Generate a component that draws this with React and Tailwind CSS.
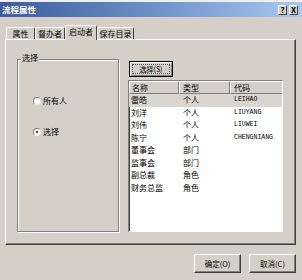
import React from 'react';

const rows = [
    { name: '雷皓', type: '个人', code: 'LEIHAO', selected: true },
    { name: '刘洋', type: '个人', code: 'LIUYANG' },
    { name: '刘伟', type: '个人', code: 'LIUWEI' },
    { name: '陈宁', type: '个人', code: 'CHENGNIANG' },
    { name: '董事会', type: '部门', code: '' },
    { name: '监事会', type: '部门', code: '' },
    { name: '副总裁', type: '角色', code: '' },
    { name: '财务总监', type: '角色', code: '' },
];

const tabs = [
    { label: '属性', w: 'w-[29px]' },
    { label: '督办者', w: 'w-[30px]' },
    { label: '启动者', w: 'w-[32px]', active: true },
    { label: '保存目录', w: 'w-[37px]' },
];

function Radio({ checked, label }) {
    return (
        <div className="flex items-center gap-[2px]">
            <span className="w-[8px] h-[8px] rounded-full bg-white border border-[#808080] border-r-[#e8e8e8] border-b-[#e8e8e8] flex items-center justify-center">
                {checked && <span className="w-[2px] h-[2px] rounded-full bg-black" />}
            </span>
            <span className="text-[8px] leading-none">{label}</span>
        </div>
    );
}

function ClassicButton({ children, className = '', def = false }) {
    return (
        <div className={`${className} ${def ? 'border border-black' : 'border border-white border-r-[#404040] border-b-[#404040]'} bg-[#d4d0c8]`}>
            <div className={`w-full h-full flex items-center justify-center ${def ? 'border border-white border-r-[#808080] border-b-[#808080] p-px' : 'shadow-[inset_-1px_-1px_0_#808080]'}`}>
                {def ? (
                    <span className="w-full h-full border border-dotted border-[#555] flex items-center justify-center text-[7px] leading-none whitespace-nowrap">
                        {children}
                    </span>
                ) : (
                    <span className="text-[7.5px] leading-none whitespace-nowrap">{children}</span>
                )}
            </div>
        </div>
    );
}

export default function App() {
    return (
        <div className="w-[302px] h-[280px] bg-[#d4d0c8] border-t-2 border-[#efefef] text-black font-['Noto_Sans_CJK_SC','Liberation_Sans',sans-serif] overflow-hidden">
            {/* Title bar */}
            <div className="h-[15px] bg-gradient-to-r from-[#3b5c9e] via-[#6e8fc6] to-[#a9caf0] flex items-center justify-between pl-[2px] pr-[4px]">
                <span className="text-white font-bold text-[8.5px] leading-none">流程属性</span>
                <div className="flex gap-[2px]">
                    <div className="w-[9px] h-[10px] bg-[#d4d0c8] border border-white border-r-[#404040] border-b-[#404040] flex items-center justify-center text-[8px] font-bold leading-none">?</div>
                    <div className="w-[9px] h-[10px] bg-[#d4d0c8] border border-white border-r-[#404040] border-b-[#404040] flex items-center justify-center text-[8px] font-bold leading-none">X</div>
                </div>
            </div>

            <div className="pl-[5px] pr-[6px]">
                {/* Tabs */}
                <div className="mt-[8px] h-[14px] flex items-end pl-[1px]">
                    {tabs.map((t) =>
                        t.active ? (
                            <div key={t.label} className={`${t.w} h-[15px] -mb-px relative z-10 bg-[#d4d0c8] border-t border-l border-white border-r border-r-[#404040] rounded-t-[2px] flex items-center justify-center text-[8px] leading-none pb-[2px]`}>
                                {t.label}
                            </div>
                        ) : (
                            <div key={t.label} className={`${t.w} h-[12px] bg-[#d4d0c8] border-t border-l border-white border-r border-r-[#404040] rounded-t-[2px] flex items-center justify-center text-[8px] leading-none`}>
                                {t.label}
                            </div>
                        )
                    )}
                </div>

                {/* Tab panel */}
                <div className="h-[206px] border border-white border-r-[#404040] border-b-[#404040] shadow-[inset_-1px_-1px_0_#808080] flex pl-[11px] pt-[19px]">
                    {/* Group box */}
                    <div className="relative w-[102px] h-[173px] border border-[#808080] shadow-[inset_1px_1px_0_#fff,1px_1px_0_#fff]">
                        <span className="absolute -top-[6px] left-[3px] bg-[#d4d0c8] px-[1px] text-[8px] leading-none">选择</span>
                        <div className="flex flex-col gap-[23px] pl-[15px] pt-[37px]">
                            <Radio label="所有人" />
                            <Radio label="选择" checked />
                        </div>
                    </div>

                    {/* Right column */}
                    <div className="ml-[9px] mt-[2px] flex flex-col">
                        <ClassicButton def className="w-[44px] h-[16px] ml-px">选择(S)</ClassicButton>
                        <div className="mt-[3px] w-[155px] h-[152px] border border-[#808080] border-r-white border-b-white bg-white">
                            <div className="h-full shadow-[inset_1px_1px_0_#404040]">
                                <div className="flex h-[13px] text-[8px] leading-none">
                                    <div className="w-[50px] bg-[#d4d0c8] border-t border-l border-white border-r border-b border-r-[#808080] border-b-[#808080] flex items-center pl-[2px]">名称</div>
                                    <div className="w-[51px] bg-[#d4d0c8] border-t border-l border-white border-r border-b border-r-[#808080] border-b-[#808080] flex items-center pl-[3px]">类型</div>
                                    <div className="flex-1 bg-[#d4d0c8] border-t border-l border-white border-b border-b-[#808080] flex items-center pl-[3px]">代码</div>
                                </div>
                                {rows.map((r) => (
                                    <div key={r.name} className={`flex h-[12.5px] items-center text-[8px] leading-none ${r.selected ? 'bg-[#d9d6d0]' : ''}`}>
                                        <span className="w-[50px] pl-[2px]">{r.name}</span>
                                        <span className="w-[51px] pl-[4px]">{r.type}</span>
                                        <span className="pl-[4px] font-['Liberation_Mono',monospace] text-[6.5px]">{r.code}</span>
                                    </div>
                                ))}
                            </div>
                        </div>
                    </div>
                </div>

                {/* Dialog buttons */}
                <div className="mt-[9px] flex justify-end gap-[8px]">
                    <ClassicButton className="w-[47px] h-[19px]">确定(O)</ClassicButton>
                    <ClassicButton className="w-[47px] h-[19px]">取消(C)</ClassicButton>
                </div>
            </div>
        </div>
    );
}
